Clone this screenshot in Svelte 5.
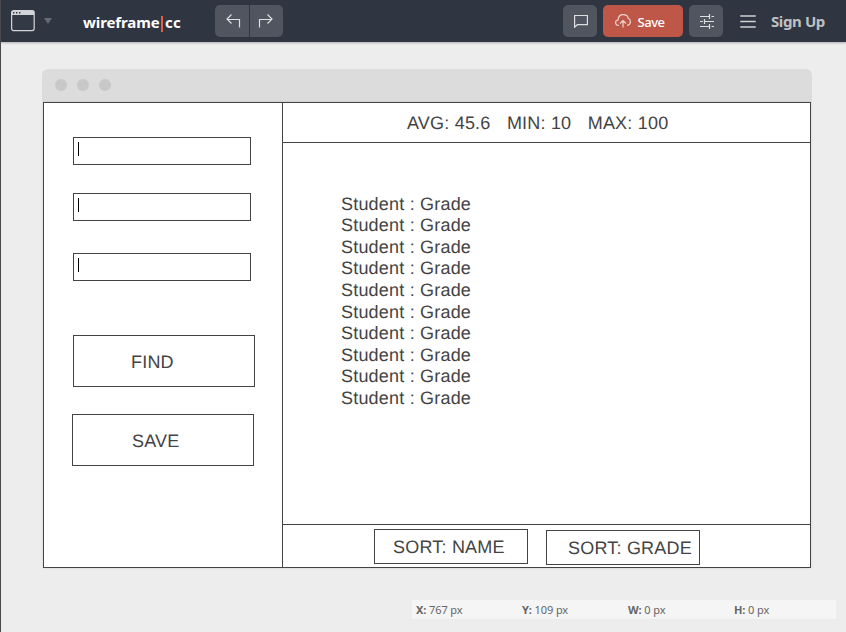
<script>
  const fieldIds = ['first', 'second', 'third'];
  const students = Array.from({ length: 10 }, () => 'Student : Grade');
  const metrics = [
    ['X:', '767 px'],
    ['Y:', '109 px'],
    ['W:', '0 px'],
    ['H:', '0 px'],
  ];
</script>

<div class="page">
  <header>
    <svg class="window-icon" width="24" height="22" viewBox="0 0 24 22">
      <rect x=".6" y=".6" width="22.6" height="20" rx="2" fill="#343a45" stroke="#d3d4d7" stroke-width="1.2" />
      <path d="M1 1h22v4H1z" fill="#d3d4d7" />
      <path d="M2 2h1.4v1.4H2zM5 2h1.4v1.4H5zM8 2h1.4v1.4H8z" fill="#303641" />
    </svg>
    <svg class="caret-down" width="8" height="6" viewBox="0 0 8 6"><path d="M0 0h8L4 6z" fill="#646a74" /></svg>
    <div class="logo"><span class="word">wireframe</span><i></i><span class="cc">cc</span></div>
    <div class="history">
      <button aria-label="Undo">
        <svg width="15" height="14" viewBox="0 0 15 14"><path d="M5.500.5L1 5l4.500 4.500M1 5.500h12.500v8" /></svg>
      </button>
      <button aria-label="Redo">
        <svg width="15" height="14" viewBox="0 0 15 14"><path d="M9.500.5L14 5 9.500 9.500M14 5.500H1.500v8" /></svg>
      </button>
    </div>
    <button class="tool comment" aria-label="Comments">
      <svg width="14" height="14" viewBox="0 0 14 14"><path d="M.6 1.500h12.800v9.200H3.400L.6 13.200z" /></svg>
    </button>
    <button class="save">
      <svg width="16" height="14" viewBox="0 0 16 14"><path d="M4 11.400C2 11.400.6 10.300.6 8.500c0-1.500 1.200-2.500 2.500-2.500C3.200 2.700 5.200.7 8.300.7c2.600 0 4.500 1.500 5 3.600C14.700 4.900 15.400 6 15.400 7.700c0 2-1.100 3.300-3.200 3.700M8 13.600V6.800M5 9.500l3-2.900 3 2.900" /></svg>
      <span>Save</span>
    </button>
    <button class="tool settings" aria-label="Settings">
      <svg width="14" height="15" viewBox="0 0 14 15"><path d="M0 2.500h9.500M9.500 0v5M11.500 2.500H14M0 7.500h3M4.500 5v5M5 7.500h9M0 12.500h9.500M9.500 10v5M11.500 12.500H14" /></svg>
    </button>
    <svg class="menu" width="16" height="13" viewBox="0 0 16 13"><path d="M.3 1h15.400M.3 6.500h15.400M.3 12h15.400" /></svg>
    <a href="#signup">Sign Up</a>
  </header>

  <main>
    <div class="titlebar"><b></b><b></b><b></b></div>
    <div class="canvas">
      <aside>
        {#each fieldIds as id}
          <div class="field {id}"><i></i></div>
        {/each}
        <div class="box find">FIND</div>
        <div class="box store">SAVE</div>
      </aside>
      <section>
        <div class="stats"><span>AVG: 45.6</span><span>MIN: 10</span><span>MAX: 100</span></div>
        <div class="list">
          {#each students as student}<div>{student}</div>{/each}
        </div>
        <div class="sorts">
          <div class="box name">SORT: NAME</div>
          <div class="box grade">SORT: GRADE</div>
        </div>
      </section>
    </div>
  </main>

  <footer>
    {#each metrics as [label, value]}<div><strong>{label}</strong> {value}</div>{/each}
  </footer>
</div>

<style>
  :global(body) { margin: 0; }
  .page { box-sizing: border-box; width: 846px; height: 632px; background: #ededed; border-left: 1px solid #4a4a4a; overflow: hidden; display: flex; flex-direction: column; font-family: "Noto Sans", sans-serif; }
  header { height: 42px; flex: none; display: flex; align-items: flex-start; background: #303641; box-shadow: 0 1px 2px #0004; }
  svg { display: block; flex: none; }
  .window-icon { margin: 10px 0 0 10px; }
  .caret-down { margin: 18px 0 0 9px; }
  .logo { display: flex; width: 101px; margin: 11px 0 0 31px; height: 22px; line-height: 22px; font-size: 15px; font-weight: 700; color: #fff; flex: none; }
  .word { width: 78px; letter-spacing: -.1px; }
  .logo i { width: 2px; height: 16px; margin: 5px 2px 0 0; background: #e65c49; }
  .cc { letter-spacing: .3px; }
  button { box-sizing: border-box; border: 0; padding: 0; margin: 0; background: #50555f; color: #dddee0; height: 32px; display: flex; align-items: center; justify-content: center; flex: none; }
  button svg, .menu { fill: none; stroke: currentColor; stroke-width: 1.2; }
  .history { display: flex; gap: 1px; width: 68px; margin: 5px 0 0 31px; border-radius: 5px; overflow: hidden; }
  .history button { width: 34px; }
  .history button:first-child svg { margin: 0 0 0 2px; }
  .history button:last-child { width: 33px; }
  .history button:last-child svg { margin: 0 3px 0 0; }
  .tool { width: 34px; border-radius: 5px; margin-top: 5px; }
  .comment { margin-left: 280px; }
  .comment svg { margin-left: 1px; }
  .save { width: 80px; margin: 5px 0 0 6px; border-radius: 5px; background: #bf5748; color: #eed5d1; gap: 7px; font: 500 13px "Noto Sans", sans-serif; padding-right: 7px; }
  .save span { color: #fff; padding-top: 2px; letter-spacing: -.5px; }
  .settings { margin-left: 6px; }
  .settings svg { margin: 1px 0 0 1px; }
  .menu { margin: 15px 0 0 17px; color: #d0d1d4; stroke-width: 1.6; }
  a { margin: 10px 0 0 15px; line-height: 22px; font-size: 15px; font-weight: 700; letter-spacing: -.4px; color: #bfc0c3; text-decoration: none; white-space: nowrap; }
  main { width: 770px; margin: 27px 0 0 41px; flex: none; }
  .titlebar { height: 33px; background: #dcdcdc; border-radius: 6px 6px 0 0; display: flex; gap: 10px; box-sizing: border-box; padding: 10px 0 0 13px; }
  .titlebar b { width: 12px; height: 12px; border-radius: 50%; background: #c8c8c8; }
  .canvas { box-sizing: border-box; width: 768px; height: 466px; margin-left: 1px; border: 1px solid #444; background: #fff; display: flex; box-shadow: 0 0 2px #0002; font: 18px/21.6px "Liberation Sans", sans-serif; letter-spacing: .2px; text-rendering: geometricPrecision; color: #444; }
  aside { width: 238px; border-right: 1px solid #444; flex: none; }
  .field { box-sizing: border-box; width: 178px; height: 28px; border: 1px solid #444; margin-left: 29px; padding: 4px; }
  .field i { display: block; width: 1px; height: 14px; background: #000; }
  .first { margin-top: 34px; }
  .second { margin-top: 28px; }
  .third { margin-top: 32px; }
  .box { box-sizing: border-box; border: 1px solid #444; white-space: nowrap; }
  .find, .store { width: 182px; height: 52px; line-height: 52px; }
  .find { margin: 54px 0 0 29px; padding-left: 57px; }
  .store { margin: 27px 0 0 28px; padding-left: 59px; }
  section { flex: 1; display: flex; flex-direction: column; }
  .stats { height: 39px; border-bottom: 1px solid #444; display: flex; gap: 16.4px; padding-left: 124px; line-height: 40px; }
  .list { height: 330.4px; padding: 50.6px 0 0 58px; }
  .sorts { flex: 1; border-top: 1px solid #444; display: flex; gap: 18px; padding-left: 91px; }
  .sorts .box { width: 154px; height: 35px; line-height: 34px; }
  .name { margin-top: 4px; padding-left: 18px; }
  .grade { margin-top: 5px; padding-left: 21px; }
  footer { width: 424px; height: 19px; margin: 32px 0 0 411px; background: #f5f5f5; display: flex; box-sizing: border-box; padding-left: 4px; font-size: 11px; line-height: 19px; color: #666; flex: none; }
  footer div { width: 106px; flex: none; letter-spacing: -.1px; }
  strong { font-weight: 700; }
</style>
